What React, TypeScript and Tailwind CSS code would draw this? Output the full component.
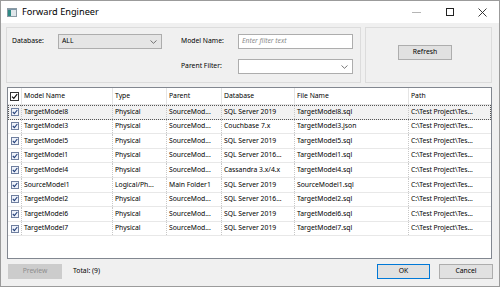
import React from "react";

const rows = [
    ["TargetModel8", "Physical", "SourceMod...", "SQL Server 2019", "TargetModel8.sql"],
    ["TargetModel3", "Physical", "SourceMod...", "Couchbase 7.x", "TargetModel3.json"],
    ["TargetModel5", "Physical", "SourceMod...", "SQL Server 2019", "TargetModel5.sql"],
    ["TargetModel1", "Physical", "SourceMod...", "SQL Server 2016...", "TargetModel1.sql"],
    ["TargetModel4", "Physical", "SourceMod...", "Cassandra 3.x/4.x", "TargetModel4.sql"],
    ["SourceModel1", "Logical/Ph...", "Main Folder1", "SQL Server 2019", "SourceModel1.sql"],
    ["TargetModel2", "Physical", "SourceMod...", "SQL Server 2016...", "TargetModel2.sql"],
    ["TargetModel6", "Physical", "SourceMod...", "SQL Server 2019", "TargetModel6.sql"],
    ["TargetModel7", "Physical", "SourceMod...", "SQL Server 2019", "TargetModel7.sql"],
];

const widths = ["w-[91px]", "w-[54px]", "w-[55px]", "w-[73px]", "w-[114px]"];

function Chevron() {
    return (
        <svg width="7" height="4" viewBox="0 0 7 4" className="shrink-0">
            <path d="M0.5 0.5 L3.5 3.3 L6.5 0.5" fill="none" stroke="#555" strokeWidth="0.8" />
        </svg>
    );
}

function SmallCheck() {
    return (
        <div className="flex h-[8px] w-[8px] items-center justify-center border border-[#6f7f9f] bg-[#eef2fa]">
            <svg width="6" height="6" viewBox="0 0 6 6">
                <path d="M0.8 3 L2.4 4.6 L5.3 1" fill="none" stroke="#24407a" strokeWidth="1.1" />
            </svg>
        </div>
    );
}

export default function App() {
    return (
        <div
            className="flex h-[287px] w-[500px] flex-col border border-[#9b9b9b] bg-[#f0f0f0] text-[6.8px] text-black"
            style={{ fontFamily: '"Noto Sans", "Liberation Sans", sans-serif' }}
        >
            {/* title bar */}
            <div className="flex h-[22px] shrink-0 items-center bg-white">
                <svg width="10" height="9" viewBox="0 0 10 9" className="ml-[6px]">
                    <rect x="0.5" y="0.5" width="9" height="8" fill="#dfe6ea" stroke="#8a9aa4" />
                    <rect x="1" y="2" width="3" height="6" fill="#2f8a84" />
                    <rect x="1" y="1" width="8" height="1" fill="#7d95a6" />
                </svg>
                <span className="ml-[5px] text-[9.2px] text-black">Forward Engineer</span>
                <div className="ml-auto flex h-full items-center">
                    <div className="flex w-[33px] justify-center">
                        <div className="h-px w-[9px] bg-[#b5b5b5]" />
                    </div>
                    <div className="flex w-[33px] justify-center">
                        <div className="h-[8px] w-[8px] border border-[#222]" />
                    </div>
                    <div className="flex w-[33px] justify-center">
                        <svg width="9" height="9" viewBox="0 0 9 9">
                            <path d="M0.5 0.5 L8.5 8.5 M8.5 0.5 L0.5 8.5" stroke="#222" strokeWidth="0.9" />
                        </svg>
                    </div>
                </div>
            </div>

            {/* filters */}
            <div className="mt-[4px] flex gap-[4px] pl-[5px]">
                <div className="flex h-[56px] w-[355px] flex-col border border-[#dcdcdc] pt-[6px]">
                    <div className="flex items-center">
                        <span className="w-[51px] pl-[5px]">Database:</span>
                        <div className="flex h-[15px] w-[104px] items-center justify-between border border-[#adadad] bg-[#e5e5e5] pl-[3px] pr-[4px]">
                            <span>ALL</span>
                            <Chevron />
                        </div>
                        <span className="ml-[19px] w-[57px]">Model Name:</span>
                        <div className="flex h-[15px] w-[115px] items-center border border-[#adadad] bg-white pl-[3px] italic text-[#8a8a8a]">
                            Enter filter text
                        </div>
                    </div>
                    <div className="mt-[10px] flex items-center pl-[174px]">
                        <span className="w-[57px]">Parent Filter:</span>
                        <div className="flex h-[15px] w-[115px] items-center justify-end border border-[#adadad] bg-white pr-[4px]">
                            <Chevron />
                        </div>
                    </div>
                </div>
                <div className="h-[56px] w-[127px] border border-[#dcdcdc] pl-[32px] pt-[17px]">
                    <div className="flex h-[15px] w-[54px] items-center justify-center border border-[#adadad] bg-[#e1e1e1]">
                        Refresh
                    </div>
                </div>
            </div>

            {/* table */}
            <div className="ml-[6px] mt-[4px] flex h-[172px] w-[485px] flex-col border border-[#828790] bg-white">
                <div className="flex h-[17px] shrink-0 border-b border-[#e5e5e5]">
                    <div className="flex w-[14px] items-center justify-center border-r border-[#e5e5e5]">
                        <div className="flex h-[9px] w-[9px] items-center justify-center border border-[#333] bg-white">
                            <svg width="7" height="7" viewBox="0 0 7 7">
                                <path d="M1 3.6 L2.8 5.4 L6.2 1.2" fill="none" stroke="#111" strokeWidth="1.2" />
                            </svg>
                        </div>
                    </div>
                    {["Model Name", "Type", "Parent", "Database", "File Name"].map((h, i) => (
                        <div key={h} className={`${widths[i]} flex items-center border-r border-[#e5e5e5] pl-[2px]`}>
                            {h}
                        </div>
                    ))}
                    <div className="flex flex-1 items-center pl-[2px]">Path</div>
                </div>
                {rows.map((r, idx) => (
                    <div
                        key={r[0]}
                        className={`flex h-[14.6px] shrink-0 border-b border-[#e8e8e8] ${
                            idx === 0 ? "bg-[#f2f2f2] outline-1 -outline-offset-1 outline-dotted outline-[#555]" : ""
                        }`}
                    >
                        <div className="flex w-[14px] items-center justify-center border-r border-dotted border-[#c8c8c8]">
                            <SmallCheck />
                        </div>
                        {r.map((c, i) => (
                            <div
                                key={i}
                                className={`${widths[i]} flex items-center overflow-hidden whitespace-nowrap border-r border-dotted border-[#c8c8c8] pl-[2px]`}
                            >
                                {c}
                            </div>
                        ))}
                        <div className="flex min-w-0 flex-1 items-center overflow-hidden whitespace-nowrap pl-[2px] tracking-[-0.1px]">
                            C:\Test Project\Tes...
                        </div>
                    </div>
                ))}
            </div>

            {/* footer */}
            <div className="mt-[5px] flex items-center pl-[7px]">
                <div className="flex h-[15px] w-[54px] items-center justify-center border border-[#cccccc] bg-[#cccccc] text-[#8d8d8d]">
                    Preview
                </div>
                <span className="ml-[11px]">Total: (9)</span>
                <div className="ml-auto flex h-[15px] w-[53px] items-center justify-center border border-[#0078d7] bg-[#e1e1e1]">
                    OK
                </div>
                <div className="ml-[9px] mr-[6px] flex h-[15px] w-[54px] items-center justify-center border border-[#adadad] bg-[#e1e1e1]">
                    Cancel
                </div>
            </div>
        </div>
    );
}
